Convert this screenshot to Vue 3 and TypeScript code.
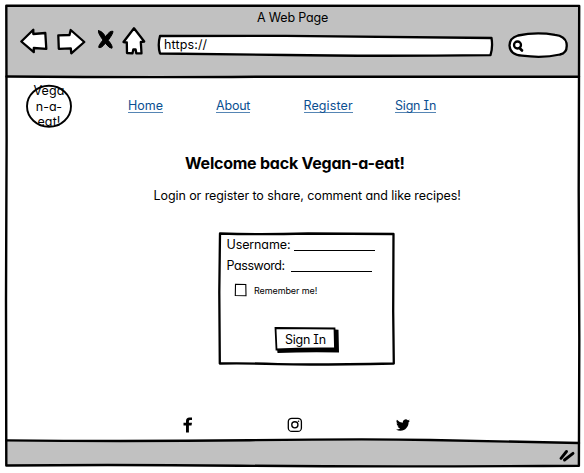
<script setup lang="ts">
interface NavLink {
  id: string
  label: string
}

const links: NavLink[] = [
  { id: 'home', label: 'Home' },
  { id: 'about', label: 'About' },
  { id: 'register', label: 'Register' },
  { id: 'signin', label: 'Sign In' },
]
</script>

<template>
  <div class="window">
    <svg class="frame" viewBox="0 0 584 473" aria-hidden="true">
      <path fill="#c1c1c1" d="M6 5.500L579 6V77L6 76.500Z" />
      <path fill="#c1c1c1" d="M6 440.500Q180 441 300 439.500Q450 439 579 443V466L6 465Z" />
      <g fill="none" stroke="#000" stroke-width="2.400" stroke-linejoin="round" stroke-linecap="round">
        <path d="M6.300 5.700L579.200 5.900L578.700 190L579.300 340L578.900 465.800Q380 467 240 465.700Q110 464.300 6.300 465.500L6 300L6.600 140Z" />
        <path d="M6.500 76.500Q150 77.700 270 76.700L579 76.800" />
        <path d="M6.500 440.400Q130 441.700 250 440.200T430 440Q510 441.500 579 443" />
      </g>
      <path d="M561 458.300L566.500 451.500M564.500 460L573 453.300" stroke="#000" stroke-width="2.900" stroke-linecap="round" />
    </svg>

    <header class="chrome">
      <div class="title">A Web Page</div>
      <div class="toolbar">
        <svg class="ico-back" viewBox="0 0 30 30"><path d="M3.300 15.500L15.300 3.800V8L27.300 7L28.300 22.800L15.800 22V26.200Z" /></svg>
        <svg class="ico-forward" viewBox="0 0 32 30"><path d="M3.300 9.300L14.500 9L15.700 4L29.300 16L16.300 27.300L15.800 22.300L3.800 22.800Z" /></svg>
        <svg class="ico-stop" viewBox="0 0 20 24"><path d="M2.500 2.800Q6 2.500 9.600 8.800Q13.500 2.500 17 3.300Q17 5.800 12.200 12.300Q17 18 16 20.200Q13.500 20.700 9.300 15.200Q5.500 20.500 2.800 19.500Q2 18 7 12Q1.500 4.800 2.500 2.800Z" /></svg>
        <svg class="ico-home" viewBox="0 0 26 30"><path d="M13 3.300L23.200 16.500L19.800 17L20.500 28.300H15.300L14.600 24.500H12.300L11.500 28.300L6 28L5.800 17.500L2.500 17Z" /></svg>
        <div class="address">
          <svg viewBox="0 0 340 28"><path d="M4 4L130 3.800Q240 4.600 335.500 6Q337 15 334.500 23.200Q210 24.400 130 23Q65 22.500 4 21.500Q1.500 13 4 4Z" /></svg>
          <span>https://</span>
        </div>
        <svg class="search" viewBox="0 0 62 30"><path d="M11 5.500Q29 1.700 48 4.800Q58 6 59.500 13Q61 23 53 24.500Q36 28.500 15 25.700Q3 25 2.500 15.500Q2.500 8 11 5.500Z" /><circle cx="10.500" cy="15" r="3.500" /><path class="handle" d="M12.500 18L15 20.500" /></svg>
      </div>
    </header>

    <nav class="nav">
      <div class="logo">
        <svg viewBox="0 0 48 46"><ellipse cx="24" cy="23.300" rx="22" ry="20.500" /></svg>
        <div class="logo-text">Vega<br>n-a-<br>eat!</div>
      </div>
      <a v-for="link in links" :key="link.id" :class="['link', link.id]"><span>{{ link.label }}</span></a>
    </nav>

    <main class="main">
      <h1>Welcome back Vegan-a-eat!</h1>
      <p class="intro">Login or register to share, comment and like recipes!</p>
      <form class="card" @submit.prevent>
        <svg class="card-border" viewBox="0 0 178 134"><path d="M2 1.500Q40 2.700 90 1.500L175.500 2L175.200 80L175.800 131.500Q100 133 60 132.200Q30 131 1.800 131.500L1.300 60Z" /></svg>
        <div class="row"><span class="user-label">Username:</span><span class="line"></span></div>
        <div class="row"><span class="pass-label">Password:</span><span class="line"></span></div>
        <div class="remember">
          <svg viewBox="0 0 13 14"><path d="M1.500 1.300L11.800 1.500L12 12.800L1.300 12.500Z" /></svg>
          <span>Remember me!</span>
        </div>
        <div class="button">
          <svg viewBox="0 0 66 28"><path class="shadow" d="M3 22H61V3.500L64.500 3.800L65 26.500Q30 26 3.500 27Z" /><path class="face" d="M1.500 2L60.500 2.500L61 22.500Q30 22 2.500 23.500Z" /></svg>
          <span>Sign In</span>
        </div>
      </form>
    </main>

    <footer class="social">
      <svg class="facebook" viewBox="0 0 10 16"><path d="M3 15.500V8.500H.5V5.800H3V4Q3 .5 6.500.5H9V3H7.200Q5.900 3 5.900 4.300V5.800H9L8.500 8.500H5.900V15.500Z" /></svg>
      <svg class="instagram" viewBox="0 0 16 16"><rect x="1.300" y="1.300" width="13.100" height="13.100" rx="3.500" /><circle cx="7.850" cy="7.850" r="3.100" /><circle class="dot" cx="11.500" cy="4.200" r=".8" /></svg>
      <svg class="twitter" viewBox="0 0 24 24"><path d="M24 4.560a9.800 9.800 0 0 1-2.830.78 4.900 4.900 0 0 0 2.160-2.720 9.900 9.900 0 0 1-3.130 1.190 4.920 4.920 0 0 0-8.380 4.490A14 14 0 0 1 1.670 3.150a4.900 4.900 0 0 0 1.520 6.570 4.900 4.900 0 0 1-2.230-.61v.06a4.920 4.920 0 0 0 3.950 4.830 4.900 4.900 0 0 1-2.220.08 4.920 4.920 0 0 0 4.600 3.420A9.870 9.870 0 0 1 0 19.540a13.900 13.900 0 0 0 7.550 2.210c9.140 0 14.300-7.720 13.990-14.640A10 10 0 0 0 24 4.560z" /></svg>
    </footer>
  </div>
</template>

<style>
body {
  background: #fff;
}
</style>

<style scoped>
.window {
  position: relative;
  width: 584px;
  height: 473px;
  overflow: hidden;
  display: flex;
  flex-direction: column;
  font-family: Inter, "Open Sans", sans-serif;
  font-feature-settings: "cv11", "cv08";
  font-size: 12.5px;
  line-height: 16px;
  color: #000;
  white-space: nowrap;
}

svg {
  display: block;
  flex: none;
}

.frame {
  position: absolute;
  inset: 0;
  width: 584px;
  height: 473px;
  z-index: -1;
}

.chrome {
  height: 77px;
  flex: none;
}

.title {
  padding: 10px 0 0 257px;
  letter-spacing: -0.18px;
}

.toolbar {
  display: flex;
  align-items: flex-start;
  padding-left: 17.5px;
}

.toolbar svg {
  fill: #fff;
  stroke: #000;
  stroke-width: 2.3;
  stroke-linejoin: round;
  stroke-linecap: round;
}

.ico-back { width: 30px; height: 30px; }
.ico-forward { width: 32px; height: 30px; margin-left: 7.5px; }
.toolbar .ico-stop { width: 20px; height: 24px; margin: 2px 0 0 9px; fill: #000; stroke-width: 1; }
.ico-home { width: 26px; height: 30px; margin-left: 5px; margin-top: -1px; }

.address {
  display: grid;
  width: 340px;
  height: 28px;
  margin: 6px 0 0 9px;
}

.address svg,
.address span {
  grid-area: 1 / 1;
}

.address svg {
  width: 340px;
  height: 28px;
}

.address span {
  padding: 5px 0 0 8px;
  letter-spacing: 0.13px;
}

.search {
  width: 62px;
  height: 30px;
  margin: 4px 0 0 11px;
}

.search .handle {
  stroke-width: 2.6;
}

.nav {
  display: flex;
  height: 66px;
  flex: none;
  padding: 6px 0 0 25px;
  box-sizing: border-box;
}

.logo {
  display: grid;
  width: 48px;
  height: 46px;
}

.logo svg,
.logo-text {
  grid-area: 1 / 1;
}

.logo svg {
  fill: #fff;
  stroke: #000;
  stroke-width: 1.9;
}

.logo-text {
  text-align: center;
  line-height: 15.500px;
  letter-spacing: 0.1px;
}

.link {
  width: 88px;
  margin-top: 15px;
  color: #0b4f91;
}

.link span {
  display: inline-block;
  height: 14px;
  border-bottom: 1px solid #5585b4;
}

.link.home { margin-left: 55px; }
.link.about { width: 87.5px; letter-spacing: -0.2px; }
.link.register { width: 91.5px; letter-spacing: 0.1px; }
.link.signin { letter-spacing: -0.2px; }

.main {
  height: 269px;
  flex: none;
}

h1 {
  margin: 10px 0 0 185px;
  font-size: 16px;
  line-height: 20px;
  font-weight: 700;
  letter-spacing: -0.23px;
}

.intro {
  margin: 15px 0 0 153.5px;
  letter-spacing: -0.08px;
}

.card {
  position: relative;
  width: 178px;
  height: 134px;
  margin: 28px 0 0 217.5px;
  padding: 5px 0 0 9px;
  box-sizing: border-box;
}

.card-border {
  position: absolute;
  inset: 0;
  width: 178px;
  height: 134px;
  fill: none;
  stroke: #000;
  stroke-width: 2.3;
  stroke-linejoin: round;
}

.row {
  display: flex;
  height: 21px;
}

.user-label { width: 67px; letter-spacing: -0.12px; }
.pass-label { width: 64.5px; letter-spacing: -0.42px; }

.line {
  width: 81px;
  height: 13px;
  border-bottom: 1px solid #000;
}

.remember {
  display: flex;
  align-items: center;
  gap: 7.500px;
  margin: 4px 0 0 7px;
  height: 14px;
  font-size: 9px;
  letter-spacing: -0.1px;
}

.remember svg {
  width: 13px;
  height: 14px;
  fill: #fff;
  stroke: #000;
  stroke-width: 1.1;
}

.remember span {
  padding-top: 1px;
}

.button {
  display: grid;
  width: 66px;
  height: 28px;
  margin: 29px 0 0 47.5px;
}

.button svg,
.button span {
  grid-area: 1 / 1;
}

.button span {
  padding: 6px 0 0 11px;
  letter-spacing: -0.25px;
}

.button .face {
  fill: #fff;
  stroke: #000;
  stroke-width: 1.8;
}

.social {
  display: flex;
  align-items: center;
  height: 26px;
  padding-left: 183px;
}

.facebook { width: 10px; height: 16px; }
.instagram { width: 16px; height: 16px; margin-left: 94px; fill: none; stroke: #000; stroke-width: 1.3; }
.instagram .dot { fill: #000; stroke: none; }
.twitter { width: 14px; height: 14px; margin-left: 93px; }
</style>
